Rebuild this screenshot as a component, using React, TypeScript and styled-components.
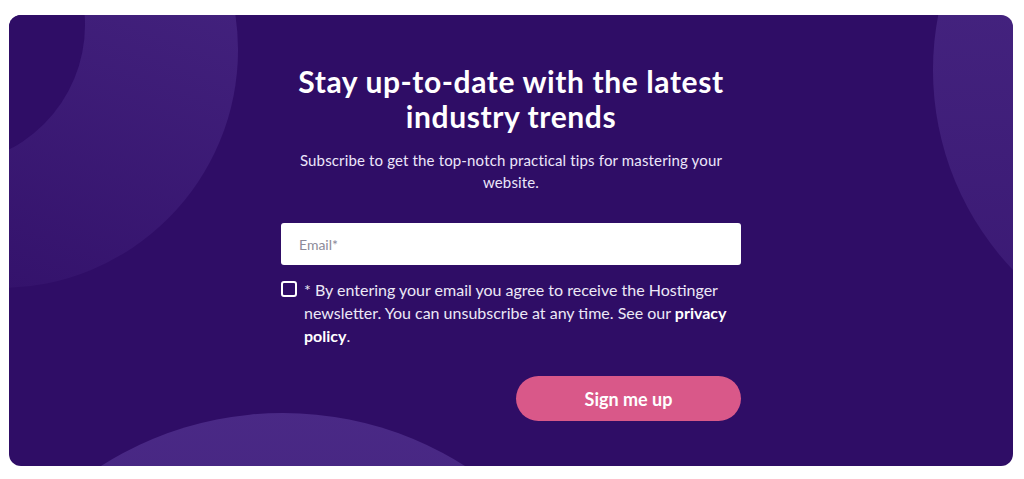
import React from "react";
import styled, { createGlobalStyle } from "styled-components";

const GlobalStyle = createGlobalStyle`
  html, body { margin: 0; padding: 0; background: #ffffff; }
  body { font-family: Lato, "Noto Sans", Arial, sans-serif; }
  * { box-sizing: border-box; }
`;

const Page = styled.div`
  padding: 15px 11px 13px 9px;
`;

const Card = styled.section`
  position: relative;
  overflow: hidden;
  height: 451px;
  border-radius: 12px;
  background: #2f0d66;
  display: flex;
  justify-content: center;
`;

const Blob = styled.div<{ $x: number; $y: number; $r: number; $angle: number; $from: number; $to: number }>`
  position: absolute;
  left: ${(p) => p.$x - p.$r}px;
  top: ${(p) => p.$y - p.$r}px;
  width: ${(p) => p.$r * 2}px;
  height: ${(p) => p.$r * 2}px;
  border-radius: 50%;
  background: linear-gradient(
    ${(p) => p.$angle}deg,
    rgba(130, 100, 200, ${(p) => p.$from}) 0%,
    rgba(130, 100, 200, ${(p) => p.$to}) 100%
  );
`;

const Hole = styled.div<{ $x: number; $y: number; $r: number }>`
  position: absolute;
  left: ${(p) => p.$x - p.$r}px;
  top: ${(p) => p.$y - p.$r}px;
  width: ${(p) => p.$r * 2}px;
  height: ${(p) => p.$r * 2}px;
  border-radius: 50%;
  background: #2f0d66;
`;

const Content = styled.div`
  position: relative;
  width: 460px;
  padding-top: 49px;
  display: flex;
  flex-direction: column;
  align-items: stretch;
`;

const Title = styled.h2`
  margin: 0 -10px;
  text-align: center;
  color: #ffffff;
  font-size: 30px;
  letter-spacing: 0.6px;
  line-height: 35px;
  font-weight: 700;
`;

const Subtitle = styled.p`
  margin: 15px 0 0;
  text-align: center;
  color: #ece6fa;
  font-size: 15px;
  letter-spacing: 0.15px;
  line-height: 22px;
  padding: 0 10px;
`;

const Input = styled.input`
  margin-top: 30px;
  height: 42px;
  width: 100%;
  border: none;
  border-radius: 3px;
  background: #ffffff;
  padding: 0 18px;
  font-family: inherit;
  font-size: 14px;
  color: #36344d;
  outline: none;
  &::placeholder { color: #8c8a99; }
`;

const Consent = styled.label`
  margin-top: 13px;
  display: flex;
  gap: 7px;
  align-items: flex-start;
  color: #ece8f6;
  font-size: 16px;
  line-height: 23px;
`;

const Box = styled.span`
  flex: none;
  margin-top: 3px;
  width: 16px;
  height: 16px;
  border: 2px solid #ffffff;
  border-radius: 3px;
`;

const Strong = styled.b`
  color: #ffffff;
  font-weight: 700;
`;

const Actions = styled.div`
  margin-top: 29px;
  display: flex;
  justify-content: flex-end;
`;

const Button = styled.button`
  width: 225px;
  height: 45px;
  border: none;
  border-radius: 23px;
  background: #d95889;
  color: #ffffff;
  font-family: inherit;
  font-size: 18px;
  font-weight: 700;
`;

export default function App() {
  return (
    <>
      <GlobalStyle />
      <Page>
        <Card>
          <Blob $x={-9} $y={35} $r={238} $angle={200} $from={0.32} $to={0.02} />
          <Hole $x={-64} $y={10} $r={140} />
          <Blob $x={1214} $y={55} $r={290} $angle={180} $from={0.32} $to={0.12} />
          <Blob $x={274} $y={737} $r={339} $angle={180} $from={0.32} $to={0.1} />
          <Content>
            <Title>Stay up-to-date with the latest industry trends</Title>
            <Subtitle>Subscribe to get the top-notch practical tips for mastering your website.</Subtitle>
            <Input type="email" placeholder="Email*" />
            <Consent>
              <Box />
              <span>
                * By entering your email you agree to receive the Hostinger newsletter. You can unsubscribe at any time. See our <Strong>privacy policy</Strong>.
              </span>
            </Consent>
            <Actions>
              <Button>Sign me up</Button>
            </Actions>
          </Content>
        </Card>
      </Page>
    </>
  );
}
